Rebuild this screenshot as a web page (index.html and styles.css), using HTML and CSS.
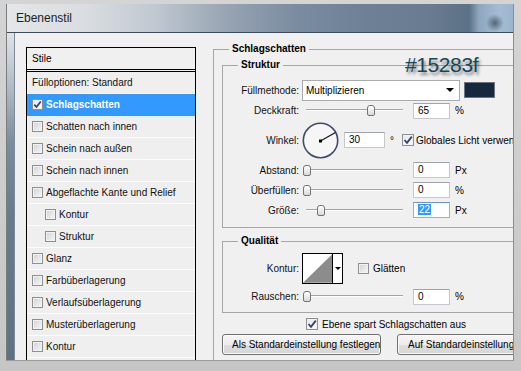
FILE: index.html
```html
<!DOCTYPE html>
<html lang="de">
<head>
<meta charset="utf-8">
<title>Ebenenstil</title>
<link rel="stylesheet" href="styles.css">
</head>
<body>
<div class="frame">
  <div class="window">
    <div class="titlebar"><span class="title">Ebenenstil</span></div>
    <div class="wbody">
      <div class="wstrip"></div>
      <div class="content">
        <div class="stylelist">
          <div class="list-head">Stile</div>
          <ul class="rows">
            <li class="row">Fülloptionen: Standard</li>
            <li class="row selected"><span class="cb checked"><svg viewBox="0 0 9 9" width="9" height="9"><path d="M1.3 4.6 L3.5 7 L7.8 1.4" fill="none" stroke="#2f3f73" stroke-width="1.7"/></svg></span>Schlagschatten</li>
            <li class="row"><span class="cb"></span>Schatten nach innen</li>
            <li class="row"><span class="cb"></span>Schein nach außen</li>
            <li class="row"><span class="cb"></span>Schein nach innen</li>
            <li class="row"><span class="cb"></span>Abgeflachte Kante und Relief</li>
            <li class="row sub"><span class="cb"></span>Kontur</li>
            <li class="row sub"><span class="cb"></span>Struktur</li>
            <li class="row"><span class="cb"></span>Glanz</li>
            <li class="row"><span class="cb"></span>Farbüberlagerung</li>
            <li class="row"><span class="cb"></span>Verlaufsüberlagerung</li>
            <li class="row"><span class="cb"></span>Musterüberlagerung</li>
            <li class="row"><span class="cb"></span>Kontur</li>
            <li class="row"></li>
          </ul>
        </div>

        <div class="settings">
          <fieldset class="grp outer">
            <legend>Schlagschatten</legend>

            <fieldset class="grp inner struktur">
              <legend>Struktur</legend>
              <div class="frow r1">
                <span class="lbl">Füllmethode:</span>
                <span class="select"><span class="sel-text">Multiplizieren</span><span class="tri"></span></span>
                <span class="swatch"></span>
              </div>
              <div class="frow r2">
                <span class="lbl">Deckkraft:</span>
                <span class="slider"><span class="thumb" style="left:64px"></span></span>
                <span class="field">65</span><span class="unit">%</span>
              </div>
              <div class="frow r3">
                <span class="lbl">Winkel:</span>
                <svg class="dial" width="37" height="37" viewBox="0 0 37 37">
                  <circle cx="18.5" cy="18.5" r="17.2" fill="#f6f6f6" stroke="#3f4d6b" stroke-width="1.6"/>
                  <line x1="18.5" y1="19" x2="33.4" y2="10.4" stroke="#111" stroke-width="1.1"/>
                  <rect x="17" y="17.5" width="3" height="3" fill="#000"/>
                </svg>
                <span class="field wide">30</span><span class="unit deg">°</span>
                <span class="cb lg checked gl"><svg viewBox="0 0 10 10" width="10" height="10"><path d="M1.5 5 L4 7.8 L8.8 1.6" fill="none" stroke="#2f3f73" stroke-width="1.8"/></svg></span>
                <span class="cbtext">Globales Licht verwenden</span>
              </div>
              <div class="frow r4">
                <span class="lbl">Abstand:</span>
                <span class="slider"><span class="thumb" style="left:0px"></span></span>
                <span class="field">0</span><span class="unit">Px</span>
              </div>
              <div class="frow r4">
                <span class="lbl">Überfüllen:</span>
                <span class="slider"><span class="thumb" style="left:0px"></span></span>
                <span class="field">0</span><span class="unit">%</span>
              </div>
              <div class="frow r4">
                <span class="lbl">Größe:</span>
                <span class="slider"><span class="thumb" style="left:14px"></span></span>
                <span class="field focus"><span class="hl">22</span></span><span class="unit">Px</span>
              </div>
            </fieldset>

            <fieldset class="grp inner quality">
              <legend>Qualität</legend>
              <div class="frow r5">
                <span class="lbl">Kontur:</span>
                <span class="contour">
                  <svg width="30" height="29" viewBox="0 0 30 29"><rect width="30" height="29" fill="#fff"/><polygon points="0,29 30,0 30,29" fill="#8c8c8c"/></svg>
                  <span class="dd"><span class="tri small"></span></span>
                </span>
                <span class="cb smooth"></span>
                <span class="cbtext">Glätten</span>
              </div>
              <div class="frow r2 noise">
                <span class="lbl">Rauschen:</span>
                <span class="slider"><span class="thumb" style="left:0px"></span></span>
                <span class="field">0</span><span class="unit">%</span>
              </div>
            </fieldset>

            <div class="knockout">
              <span class="cb lg checked"><svg viewBox="0 0 10 10" width="10" height="10"><path d="M1.5 5 L4 7.8 L8.8 1.6" fill="none" stroke="#2f3f73" stroke-width="1.8"/></svg></span>
              <span class="cbtext">Ebene spart Schlagschatten aus</span>
            </div>

            <div class="buttons">
              <button class="btn b1" type="button">Als Standardeinstellung festlegen</button>
              <button class="btn b2" type="button">Auf Standardeinstellung zurücksetzen</button>
            </div>
          </fieldset>
        </div>

        <div class="hexnote">#15283f</div>
      </div>
    </div>
  </div>
</div>
</body>
</html>
```
FILE: styles.css
```css
* { box-sizing: border-box; }
html, body { margin: 0; padding: 0; }
body {
  width: 521px;
  height: 371px;
  overflow: hidden;
  background: #c9c9c9;
  font-family: "Liberation Sans", Arial, sans-serif;
  font-size: 10px;
  color: #000;
}
.frame {
  height: 371px;
  padding: 4px 7px 10px 6px;
  background: linear-gradient(#d4d4d4, #c6c6c6);
}
.window {
  height: 357px;
  display: flex;
  flex-direction: column;
  border-left: 1px solid #7c7c7c;
  border-right: 1px solid #8c8c8c;
  border-bottom: 1px solid #9a9a9a;
}
.titlebar {
  height: 29px;
  flex: none;
  display: flex;
  align-items: center;
  padding-left: 9px;
  padding-bottom: 1px;
  border-bottom: 1px solid #3e4b59;
  background:
    radial-gradient(circle at 488px 19px, rgba(55, 66, 82, 0.7) 0, rgba(55, 66, 82, 0) 9px),
    linear-gradient(to right, #e4e6e8 0px, #d9dde1 80px, #bfc7d0 150px, #97a4b3 220px, #7a8ca0 290px, #6d8096 360px, #697c92 420px, #5c7087 462px, #8ea7bf 472px, #a4bdd4 492px, #9cb5cc 506px);
}
.title {
  font-size: 12px;
  color: #1d1d1d;
}
.wbody {
  flex: 1;
  min-height: 0;
  display: flex;
}
.wstrip {
  width: 7px;
  flex: none;
  background: linear-gradient(#dfe3e7 0px, #b4bec8 50px, #7a8ca0 110px, #697b91 180px, #5f7187 100%);
}
.content {
  flex: 1;
  position: relative;
  overflow: hidden;
  display: flex;
  align-items: flex-start;
  padding: 10px 0 0 11px;
  border-left: 1px solid #7e8a96;
  background: #f0f0f0;
}

/* style list */
.stylelist {
  width: 170px;
  height: 340px;
  flex: none;
  margin-top: 4px;
  border: 1px solid #000;
  border-bottom: none;
  background: #efefef;
}
.list-head {
  height: 22px;
  line-height: 21px;
  padding-left: 5px;
  border-bottom: 1px solid #000;
  background: #f0f0f0;
}
.rows {
  list-style: none;
  margin: 1px 0 0;
  padding: 0;
  border-top: 1px solid #000;
}
.row {
  height: 22px;
  display: flex;
  align-items: center;
  padding-left: 5px;
  border-bottom: 1px solid #fcfcfc;
  color: #111;
  white-space: nowrap;
}
.row.sub { padding-left: 18px; }
.row.selected {
  background: #3399ff;
  border-bottom-color: #3399ff;
  color: #fff;
  font-weight: bold;
}

/* checkboxes */
.cb {
  width: 11px;
  height: 11px;
  flex: none;
  display: inline-flex;
  align-items: center;
  justify-content: center;
  margin-right: 3px;
  border: 1px solid #8e8f8f;
  background: linear-gradient(135deg, #cfd2d6, #f7f7f7);
  box-shadow: inset 0 0 0 1px #f2f2f2;
}
.cb.checked { background: linear-gradient(135deg, #e4e6ea, #ffffff); }
.cb.lg { width: 12px; height: 12px; }
.cb svg { display: block; }
.cbtext { white-space: nowrap; flex: none; }

/* settings panel */
.settings {
  width: 330px;
  flex: none;
  margin-left: 17px;
}
.grp {
  margin: 0;
  min-width: 0;
  border: 1px solid #a6a6a6;
}
.grp legend {
  padding: 0 3px;
  line-height: 12px;
  font-size: 10px;
  font-weight: bold;
}
.outer {
  padding: 4px 0 30px 8px;
}
.outer > legend { margin-left: 7px; }
.inner {
  width: 320px;
}
.inner > legend { margin-left: 15px; }
.struktur { padding: 8px 0 7px 0; }
.quality { margin-top: 7px; padding: 6px 0 6px 0; }

.frow {
  display: flex;
  align-items: center;
  white-space: nowrap;
}
.r1 { height: 22px; }
.r2 { height: 19px; }
.r3 { height: 36px; margin-top: 2px; }
.r3 + .r4 { margin-top: 2px; }
.r4 { height: 20px; }
.r5 { height: 31px; }
.noise { margin-top: 3px; }

.lbl {
  width: 76px;
  flex: none;
  text-align: right;
  margin-right: 3px;
  color: #111;
}

.select {
  width: 158px;
  height: 21px;
  flex: none;
  display: flex;
  align-items: center;
  justify-content: space-between;
  padding: 0 5px 0 3px;
  border: 1px solid #a9abaf;
  background: #fff;
}
.tri {
  width: 0;
  height: 0;
  border-left: 4px solid transparent;
  border-right: 4px solid transparent;
  border-top: 4px solid #000;
}
.tri.small {
  border-left-width: 3px;
  border-right-width: 3px;
  border-top-width: 3px;
}
.swatch {
  width: 31px;
  height: 16px;
  flex: none;
  margin-left: 4px;
  border: 1px solid #6c7480;
  background: #15283f;
}

.slider {
  position: relative;
  width: 100px;
  height: 11px;
  flex: none;
  margin-left: 1px;
}
.slider::before {
  content: "";
  position: absolute;
  left: 3px;
  right: 0;
  top: 4px;
  border-top: 1px solid #a4a4a4;
  border-bottom: 1px solid #ffffff;
}
.thumb {
  position: absolute;
  top: 0;
  width: 8px;
  height: 11px;
  border: 1px solid #747474;
  border-radius: 3px 3px 2px 2px;
  background: linear-gradient(#ffffff, #d9d9d9);
}

.field {
  width: 37px;
  height: 16px;
  flex: none;
  margin-left: 10px;
  padding-left: 4px;
  line-height: 14px;
  border: 1px solid #c5c9ce;
  border-top-color: #9ea3aa;
  background: #fff;
}
.field.wide { width: 41px; margin-left: 5px; }
.field.focus { border-color: #8fb2d8; border-top-color: #6d93c2; }
.hl { background: #3399ff; color: #fff; padding: 0 1px; }
.unit { margin-left: 5px; flex: none; }
.unit.deg { width: 7px; }

.dial { display: block; flex: none; }
.cb.gl { margin-left: 5px; margin-right: 2px; }

.contour {
  width: 41px;
  height: 31px;
  flex: none;
  display: flex;
  border: 1px solid #000;
  background: #fff;
}
.contour svg { display: block; }
.dd {
  width: 10px;
  display: flex;
  align-items: center;
  justify-content: center;
  border-left: 1px solid #000;
}
.cb.smooth { margin-left: 15px; margin-right: 4px; }

.knockout {
  height: 16px;
  margin-top: 3px;
  margin-left: 84px;
  display: flex;
  align-items: center;
}
.knockout .cb { margin-right: 4px; }

.buttons {
  display: flex;
  margin-top: 2px;
}
.btn {
  height: 21px;
  flex: none;
  padding: 0 9px;
  border: 1px solid #707070;
  border-radius: 3px;
  background: linear-gradient(#f6f6f6 0%, #ececec 50%, #dfdfdf 51%, #d5d5d5 100%);
  box-shadow: inset 0 0 0 1px #fbfbfb;
  font-family: "Liberation Sans", Arial, sans-serif;
  font-size: 10px;
  color: #000;
  white-space: nowrap;
}
.b1 { width: 159px; }
.b2 { margin-left: 16px; width: 190px; text-align: left; padding-left: 10px; }

.hexnote {
  position: absolute;
  left: 390px;
  top: 21px;
  font-family: "Liberation Sans", Arial, sans-serif;
  font-size: 21px;
  line-height: 21px;
  letter-spacing: -0.4px;
  color: #17475a;
  text-shadow: 2px 3px 3px rgba(0, 0, 0, 0.45);
}
```
